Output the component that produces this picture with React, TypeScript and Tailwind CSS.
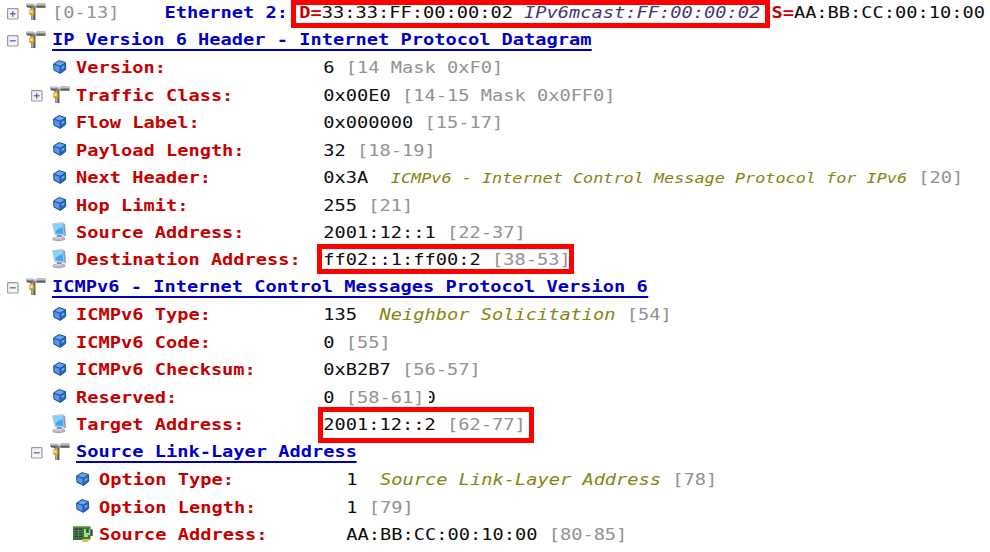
import React from "react";

type Part = { t: string; k?: "gray" | "olive" | "oliveSmall" };
type Icon = "tool" | "cube" | "pc" | "card";
type Row = {
  level: 0 | 1 | 2;
  icon: Icon;
  toggle?: "+" | "-";
  label: string;
  heading?: boolean;
  value?: Part[];
  clipped?: boolean;
};

const g = (t: string): Part => ({ t, k: "gray" });

const rows: Row[] = [
  { level: 0, icon: "tool", toggle: "-", label: "IP Version 6 Header - Internet Protocol Datagram", heading: true },
  { level: 1, icon: "cube", label: "Version:", value: [{ t: "6 " }, g("[14 Mask 0xF0]")] },
  { level: 1, icon: "tool", toggle: "+", label: "Traffic Class:", value: [{ t: "0x00E0 " }, g("[14-15 Mask 0x0FF0]")] },
  { level: 1, icon: "cube", label: "Flow Label:", value: [{ t: "0x000000 " }, g("[15-17]")] },
  { level: 1, icon: "cube", label: "Payload Length:", value: [{ t: "32 " }, g("[18-19]")] },
  {
    level: 1,
    icon: "cube",
    label: "Next Header:",
    value: [{ t: "0x3A  " }, { t: "ICMPv6 - Internet Control Message Protocol for IPv6", k: "oliveSmall" }, g(" [20]")],
  },
  { level: 1, icon: "cube", label: "Hop Limit:", value: [{ t: "255 " }, g("[21]")] },
  { level: 1, icon: "pc", label: "Source Address:", value: [{ t: "2001:12::1 " }, g("[22-37]")] },
  { level: 1, icon: "pc", label: "Destination Address:", value: [{ t: "ff02::1:ff00:2 " }, g("[38-53]")] },
  { level: 0, icon: "tool", toggle: "-", label: "ICMPv6 - Internet Control Messages Protocol Version 6", heading: true },
  { level: 1, icon: "cube", label: "ICMPv6 Type:", value: [{ t: "135  " }, { t: "Neighbor Solicitation", k: "olive" }, g(" [54]")] },
  { level: 1, icon: "cube", label: "ICMPv6 Code:", value: [{ t: "0 " }, g("[55]")] },
  { level: 1, icon: "cube", label: "ICMPv6 Checksum:", value: [{ t: "0xB2B7 " }, g("[56-57]")] },
  { level: 1, icon: "cube", label: "Reserved:", value: [{ t: "0 " }, g("[58-61]")], clipped: true },
  { level: 1, icon: "pc", label: "Target Address:", value: [{ t: "2001:12::2 " }, g("[62-77]")] },
  { level: 1, icon: "tool", toggle: "-", label: "Source Link-Layer Address", heading: true },
  { level: 2, icon: "cube", label: "Option Type:", value: [{ t: "1  " }, { t: "Source Link-Layer Address", k: "olive" }, g(" [78]")] },
  { level: 2, icon: "cube", label: "Option Length:", value: [{ t: "1 " }, g("[79]")] },
  { level: 2, icon: "card", label: "Source Address:", value: [{ t: "AA:BB:CC:00:10:00 " }, g("[80-85]")] },
];

const partClass = {
  plain: "text-[#0c0c0c]",
  gray: "text-[#929292]",
  olive: "italic text-[#85850f]",
  oliveSmall: "italic text-[#85850f] text-[14.87px]",
};

function Toggle({ sign }: { sign: "+" | "-" }) {
  return (
    <svg width="12" height="12" viewBox="0 0 12 12" className="mt-[3px]">
      <rect x="0.6" y="0.6" width="10.4" height="10.4" rx="0.8" fill="#f4f4f4" stroke="#9a9a9a" strokeWidth="1.2" />
      <path d="M2.9 5.8H8.7" stroke="#4560b4" strokeWidth="1.2" />
      {sign === "+" && <path d="M5.8 2.9V8.7" stroke="#4560b4" strokeWidth="1.2" />}
    </svg>
  );
}

function ToolIcon() {
  return (
    <svg width="20" height="18" viewBox="0 0 20 18">
      <path d="M0 .8H7.5L9.5 2.2 11 .5H19.5V4H10.5L9.2 5V17H5V5.6L3.3 4H.5Z" fill="#777b7a" />
      <path d="M.5 1.5H7L9 3 11.5 1.5H19" fill="none" stroke="#c2c6c5" strokeWidth="1.3" />
      <path d="M1 3.9H4L5.5 5.5M10.5 4.1H19.5" fill="none" stroke="#4c4e4d" strokeWidth="1.1" />
      <path d="M6.2 5V16.5" stroke="#b9bcbb" strokeWidth="1.3" />
      <path d="M8.7 5V17" stroke="#535554" strokeWidth="1.2" />
      <rect x="3.3" y="6.3" width="5" height="5.8" rx="0.8" fill="#d6a21b" />
      <rect x="4.2" y="7.2" width="2.6" height="2.8" fill="#ffe070" />
    </svg>
  );
}

function CubeIcon() {
  return (
    <svg width="14" height="14" viewBox="0 0 14 14" className="-mt-px">
      <path d="M.6 3.9 6 .6 12.5 2.6 12.7 9.4 7.4 13.4 1 10.2Z" fill="#2e70cf" stroke="#1b4f9f" strokeWidth="1" strokeLinejoin="round" />
      <path d="M1.5 4 6.2 1.3 11.9 3 7.2 5.7Z" fill="#6fa6e8" />
      <path d="M1.3 4.9 6.6 6.7V12.3L1.6 9.8Z" fill="#5797e6" />
      <path d="M7.9 6.5 12 4V9.2L8 12.3Z" fill="#2562bd" />
      <path d="M1.2 4.2 7.2 6.2 12.2 3.1M7.2 6.2V13" fill="none" stroke="#1c50a4" strokeWidth="0.8" />
      <path d="M8.7 7 11.4 5.4V7.2L8.7 9.8Z" fill="#7fb2ee" />
    </svg>
  );
}

function PcIcon() {
  return (
    <svg width="16" height="20" viewBox="0 0 16 20">
      <path d="M10.6 1.2 13 1.8 14 13.6 12.4 14.4Z" fill="#8f95b8" />
      <path d="M.6 1.8 10.8.5 12.6 13.6 3 12.6Z" fill="#c7d8ea" stroke="#92a4c0" strokeWidth="0.6" />
      <path d="M1.7 2.8 10.1 1.7 11.6 12.3 3.8 11.5Z" fill="#40a9f2" />
      <path d="M1.7 2.8 10.1 1.7 10.6 5Q6 6 3.2 9.5Z" fill="#8bd2fb" />
      <path d="M5 13 9.5 13.6 9.8 15.8 5 15.5Z" fill="#777b9e" />
      <path d="M1 16.3Q4.5 13.8 12.5 15.6L13 17.4Q7 20.2 1.2 17.9Z" fill="#b7bacd" stroke="#8c90ad" strokeWidth="0.6" />
      <path d="M2.6 16.4Q5.6 15.2 10 16" fill="none" stroke="#eceef6" strokeWidth="0.9" />
    </svg>
  );
}

function CardIcon() {
  return (
    <svg width="20" height="17" viewBox="0 0 20 17">
      <path d="M0 .5H17.5V3.2H19.5V10H17.5V13.5H0Z" fill="#3c7c32" />
      <path d="M0 1H17.5" stroke="#659b58" strokeWidth="1" />
      <rect x="2" y="2.5" width="7" height="8.5" fill="#28402c" />
      <path d="M2 4.5H9M2 6.8H9M2 9.1H9M5.5 2.5V11" stroke="#74907a" strokeWidth="0.8" />
      <path d="M11 3H13V7H16V3H17V9H15V11H11Z" fill="#a9d59b" />
      <path d="M13.5 3H15.2V6H13.5Z" fill="#1f5f25" />
      <path d="M9.5 13H15.5V16H9.5Z" fill="#d5c447" />
      <path d="M0 13.3H9.5" stroke="#284f2d" strokeWidth="1" />
      <path d="M18.8 3.4V10" stroke="#3a413c" strokeWidth="1.2" />
    </svg>
  );
}

const icons = { tool: ToolIcon, cube: CubeIcon, pc: PcIcon, card: CardIcon };
const iconSlot = {
  tool: "pl-[2px]",
  cube: "pl-[5px]",
  pc: "pl-[4px]",
  card: "pl-[2px]",
};
const indent = { 0: "pl-[7px]", 1: "pl-[30.6px]", 2: "pl-[54.2px]" };

function Lead({ icon, toggle }: { icon: Icon; toggle?: "+" | "-" }) {
  const Glyph = icons[icon];
  return (
    <>
      <span className="flex w-[17px] shrink-0 items-center">{toggle && <Toggle sign={toggle} />}</span>
      <span className={`flex w-[28px] shrink-0 items-center ${iconSlot[icon]}`}>
        <Glyph />
      </span>
    </>
  );
}

function TreeRow({ row }: { row: Row }) {
  return (
    <div className={`flex h-[27.47px] items-center ${indent[row.level]}`}>
      <Lead icon={row.icon} toggle={row.toggle} />
      <div className={`flex origin-left scale-x-[1.1315] items-center ${row.heading ? "" : "mt-[2px]"}`}>
        {row.heading ? (
          <span className="h-[22px] border-b-2 border-[#0000c4] font-bold leading-[22px] text-[#0000c4]">{row.label}</span>
        ) : (
          <span className="w-[218.6px] shrink-0 font-bold text-[#c60000]">{row.label}</span>
        )}
        {row.value && (
          <span className="flex items-baseline">
            {row.value.map((p, i) => (
              <span key={i} className={partClass[p.k ?? "plain"]}>
                {p.t}
              </span>
            ))}
            {row.clipped && (
              <span className="ml-[4px] flex w-[6px] justify-end self-center overflow-hidden text-[#0c0c0c]">
                <span>0</span>
              </span>
            )}
          </span>
        )}
      </div>
    </div>
  );
}

export default function App() {
  return (
    <main className="relative h-[552px] w-[990px] overflow-hidden whitespace-pre bg-white font-['DejaVu_Sans_Mono',monospace] text-[16.5px] leading-[24px]">
      <div className="-mt-[1.5px]">
        <div className="flex h-[27.47px] items-center pl-[7px]">
          <Lead icon="tool" toggle="+" />
          <div className="mt-[2px] flex origin-left scale-x-[1.1315]">
            <span className="text-[#929292]">{"[0-13]    "}</span>
            <span className="font-bold text-[#0000c4]">{"Ethernet 2: "}</span>
            <span className="font-bold text-[#c60000]">D=</span>
            <span className="text-[#0c0c0c]">{"33:33:FF:00:00:02 "}</span>
            <span className="italic text-[#403878]">{"IPv6mcast:FF:00:00:02 "}</span>
            <span className="font-bold text-[#c60000]">S=</span>
            <span className="text-[#0c0c0c]">AA:BB:CC:00:10:00</span>
          </div>
        </div>
        {rows.map((row, i) => (
          <TreeRow key={i} row={row} />
        ))}
      </div>
      <div className="absolute left-[291px] top-0 h-[28px] w-[479px] border-[5px] border-[#ff0000]" />
      <div className="absolute left-[317px] top-[244px] h-[30px] w-[257px] border-[5px] border-[#ff0000]" />
      <div className="absolute left-[318px] top-[407px] h-[36px] w-[216px] border-[5px] border-[#ff0000]" />
    </main>
  );
}
